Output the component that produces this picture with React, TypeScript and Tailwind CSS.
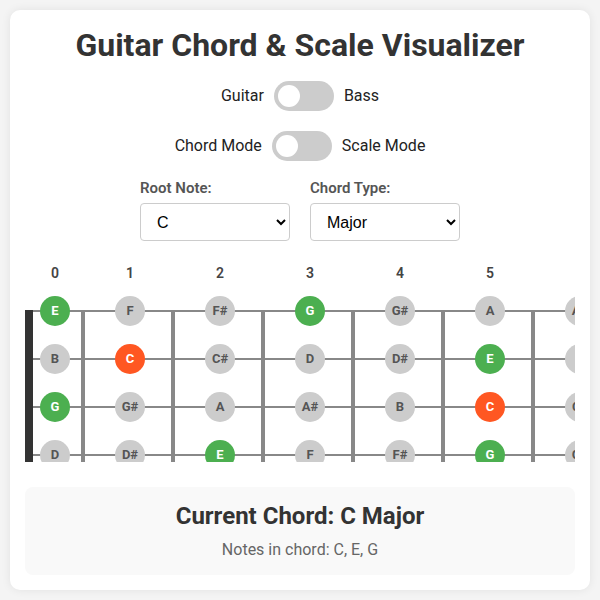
import { useState } from "react";

const NOTES = ["C", "C#", "D", "D#", "E", "F", "F#", "G", "G#", "A", "A#", "B"];
const GUITAR = ["E", "B", "G", "D", "A", "E"];
const FRETS = 13;
const CHORD = ["C", "E", "G"];

const Toggle = ({ left, right }: { left: string; right: string }) => {
  const [on, setOn] = useState(false);
  return (
    <div className="flex items-center justify-center gap-[10px] text-[16px] text-[#222]">
      <span>{left}</span>
      <button
        onClick={() => setOn(!on)}
        className="relative h-[30px] w-[60px] rounded-full bg-[#ccc]"
      >
        <span
          className={
            "absolute top-[4px] h-[22px] w-[22px] rounded-full bg-white transition-all " +
            (on ? "left-[34px]" : "left-[4px]")
          }
        />
      </button>
      <span>{right}</span>
    </div>
  );
};

const noteAt = (open: string, fret: number) => NOTES[(NOTES.indexOf(open) + fret) % 12];

const cellW = (fret: number) => (fret === 0 ? "w-[60px]" : "w-[90px]");

export default function App() {
  const frets = Array.from({ length: FRETS }, (_, i) => i);

  return (
    <div className="min-h-screen bg-[#f4f4f4] p-[10px] font-['Roboto',sans-serif]">
      <div className="rounded-[10px] bg-white px-[15px] pt-[16px] pb-[15px] shadow-[0_0_10px_rgba(0,0,0,0.08)]">
        <h1 className="text-center text-[32px] leading-[38px] font-bold text-[#333]">
          Guitar Chord &amp; Scale Visualizer
        </h1>

        <div className="mt-[17px] flex flex-col gap-[20px]">
          <Toggle left="Guitar" right="Bass" />
          <Toggle left="Chord Mode" right="Scale Mode" />
        </div>

        <div className="mt-[18px] flex justify-center gap-[20px]">
          <div className="flex flex-col gap-[6px]">
            <label className="text-[15px] leading-[18px] font-semibold text-[#555]">Root Note:</label>
            <select
              defaultValue="C"
              className="h-[38px] w-[150px] rounded-[4px] border border-[#ccc] bg-white px-[12px] font-['Liberation_Sans',sans-serif] text-[16px] text-black"
            >
              {NOTES.map((n) => (
                <option key={n}>{n}</option>
              ))}
            </select>
          </div>
          <div className="flex flex-col gap-[6px]">
            <label className="text-[15px] leading-[18px] font-semibold text-[#555]">Chord Type:</label>
            <select
              defaultValue="Major"
              className="h-[38px] w-[150px] rounded-[4px] border border-[#ccc] bg-white px-[12px] font-['Liberation_Sans',sans-serif] text-[16px] text-black"
            >
              <option>Major</option>
              <option>Minor</option>
              <option>7th</option>
            </select>
          </div>
        </div>

        <div className="mt-[24px] overflow-hidden">
          <div className="w-max">
            <div className="flex">
              {frets.map((f) => (
                <div key={f} className={cellW(f) + " text-center text-[14px] leading-[17px] font-semibold text-[#444]"}>
                  {f}
                </div>
              ))}
            </div>

            <div className="relative mt-[14px] h-[166px] overflow-hidden">
              {/* strings, nut and frets */}
              <div className="absolute inset-0">
                {GUITAR.map((_, s) => (
                  <div
                    key={s}
                    className="absolute right-0 left-[8px] h-[2px] bg-[#888]"
                    style={{ top: 14 + s * 48 }}
                  />
                ))}
                <div className="absolute top-[14px] bottom-0 left-0 w-[8px] bg-[#333]" />
                {frets.slice(1).map((f) => (
                  <div
                    key={f}
                    className="absolute top-[14px] bottom-0 w-[4px] bg-[#888]"
                    style={{ left: 56 + (f - 1) * 90 }}
                  />
                ))}
              </div>

              <div className="relative flex flex-col gap-[18px]">
                {GUITAR.map((open, s) => (
                  <div key={s} className="flex">
                    {frets.map((f) => {
                      const n = noteAt(open, f);
                      const color =
                        n === CHORD[0]
                          ? "bg-[#ff5722] text-white"
                          : CHORD.includes(n)
                          ? "bg-[#4caf50] text-white"
                          : "bg-[#ccc] text-[#555]";
                      return (
                        <div key={f} className={cellW(f) + " flex h-[30px] justify-center"}>
                          <div
                            className={
                              "flex h-[30px] w-[30px] items-center justify-center rounded-full text-[13px] font-bold " +
                              color
                            }
                          >
                            {n}
                          </div>
                        </div>
                      );
                    })}
                  </div>
                ))}
              </div>
            </div>
          </div>
        </div>

        <div className="mt-[25px] rounded-[8px] bg-[#f9f9f9] px-[15px] pt-[15px] pb-[16px] text-center">
          <h2 className="text-[24px] leading-[28px] font-bold text-[#333]">Current Chord: C Major</h2>
          <p className="mt-[10px] text-[16px] leading-[19px] text-[#666]">Notes in chord: C, E, G</p>
        </div>
      </div>
    </div>
  );
}
